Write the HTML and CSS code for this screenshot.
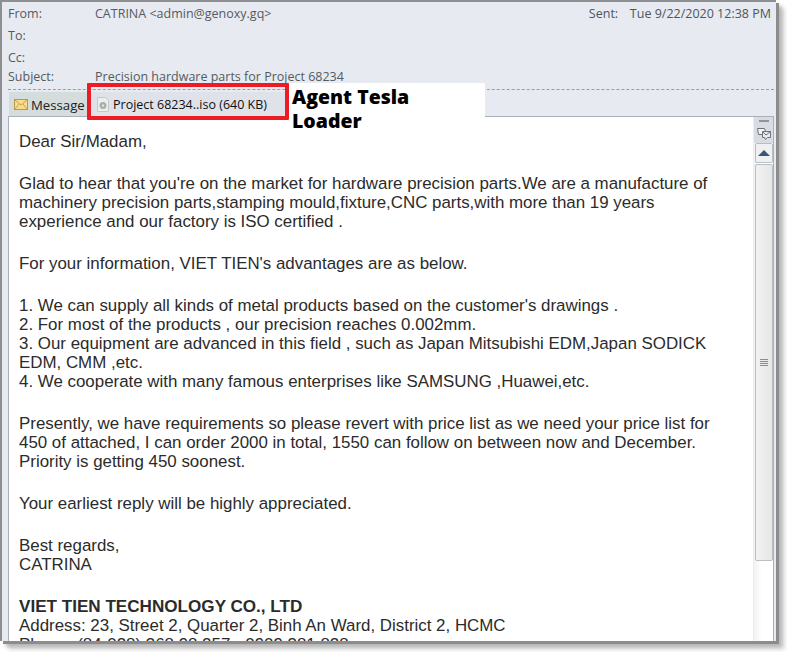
FILE: index.html
```html
<!DOCTYPE html>
<html lang="en">
<head>
<meta charset="utf-8">
<title>Precision hardware parts for Project 68234</title>
<link rel="stylesheet" href="styles.css">
</head>
<body>
<div class="window">
  <header class="head">
    <div class="row"><span class="label">From:</span><span class="value">CATRINA &lt;admin@genoxy.gq&gt;</span><span class="sent"><span class="sent-label">Sent:</span><span>Tue 9/22/2020 12:38 PM</span></span></div>
    <div class="row"><span class="label">To:</span></div>
    <div class="row"><span class="label">Cc:</span></div>
    <div class="row row-last"><span class="label">Subject:</span><span class="value">Precision hardware parts for Project 68234</span></div>
  </header>
  <nav class="tabs">
    <div class="tab tab-message">
      <svg class="ico" width="14" height="11" viewBox="0 0 14 11"><rect x="0.5" y="0.5" width="13" height="10" fill="#f8dc8a" stroke="#b99a45"/><path d="M1 1l6 5 6-5M1 10l4-5M13 10L9 5" fill="none" stroke="#c9a24c"/></svg>
      <span>Message</span>
    </div>
    <div class="tab tab-file">
      <svg class="ico" width="12" height="15" viewBox="0 0 12 15"><path d="M.5.500h8l3 3v11H.5z" fill="#eceeee" stroke="#c4c8c8"/><circle cx="6" cy="8.500" r="3.500" fill="#a9b0ac"/><circle cx="6" cy="8.500" r="1" fill="#f4f4f4"/></svg>
      <span>Project 68234..iso (640 KB)</span>
    </div>
  </nav>
  <main class="pane">
    <article class="mail">
      <p>Dear Sir/Madam,</p>
      <p>Glad to hear that you're on the market for hardware precision parts.We are a manufacture of machinery precision parts,stamping mould,fixture,CNC parts,with more than 19 years experience and our factory is ISO certified .</p>
      <p>For your information, VIET TIEN's advantages are as below.</p>
      <p>1. We can supply all kinds of metal products based on the customer's drawings .<br>2. For most of the products , our precision reaches 0.002mm.<br>3. Our equipment are advanced in this field , such as Japan Mitsubishi EDM,Japan SODICK EDM, CMM ,etc.<br>4. We cooperate with many famous enterprises like SAMSUNG ,Huawei,etc.</p>
      <p>Presently, we have requirements so please revert with price list as we need your price list for 450 of attached, I can order 2000 in total, 1550 can follow on between now and December. Priority is getting 450 soonest.</p>
      <p>Your earliest reply will be highly appreciated.</p>
      <p>Best regards,<br>CATRINA</p>
      <p><strong>VIET TIEN TECHNOLOGY CO., LTD</strong><br>Address: 23, Street 2, Quarter 2, Binh An Ward, District 2, HCMC<br>Phone: (84-028) 368 98 257 - 0909 381 828</p>
    </article>
    <aside class="scroll">
      <div class="dash"></div>
      <svg class="rules" width="14" height="12" viewBox="0 0 14 12"><path d="M.5.500h7l1 3h-2v3h-5z" fill="#f1f3f6" stroke="#6d7278"/><path d="M5.500 3.500h8v6h-3l-2 2-1-2h-2z" fill="#e8ebef" stroke="#6d7278"/><path d="M6 4l3 3 4-3" fill="none" stroke="#6d7278"/></svg>
      <button class="up" type="button" aria-label="Scroll up"><span class="tri"></span></button>
      <div class="thumb"><span class="grip"></span></div>
    </aside>
  </main>
</div>
<div class="note">
  <div class="note-text">Agent Tesla Loader</div>
</div>
<div class="redbox"></div>
</body>
</html>
```
FILE: styles.css
```css
html, body { margin: 0; padding: 0; background: #fff; }
body { width: 787px; height: 652px; overflow: hidden; position: relative; }

.window {
  box-sizing: border-box;
  width: 776px;
  height: 641px;
  display: flex;
  flex-direction: column;
  background: #e7eaf0;
  border-top: 2px solid #8d8f91;
  border-left: 2px solid #8d8f91;
  box-shadow: 3px 3px 0 #8c8c8c, 6px 6px 4px #b4b4b4, 9px 9px 4px #e2e2e2;
  font-family: "Open Sans", "Noto Sans", sans-serif;
  font-size: 12.5px;
  color: #555a60;
}

.head { box-sizing: border-box; height: 88px; margin: 0 2px 0 6px; padding: 1px 3px 0 0; border-bottom: 1px dashed #9a9ea3; flex: none; }
.row { display: flex; height: 22px; line-height: 22px; }
.row-last { height: 18px; line-height: 16px; }
.label { width: 87px; flex: none; }
.value { flex: none; }
.sent { margin-left: auto; display: flex; color: #50555b; }
.sent-label { width: 41px; }

.tabs { display: flex; height: 26px; padding-left: 7px; flex: none; color: #222; font-size: 13.200px; }
.tab { display: flex; align-items: center; height: 25px; margin-top: 2px; }
.tab-message { width: 78px; gap: 3px; padding-left: 5px; box-sizing: border-box; background: #d5dcdc; }
.tab-file { width: 200px; box-sizing: border-box; padding-left: 10px; gap: 4px; color: #111; font-size: 12.500px; background: #dfe3e9; }
.ico { flex: none; }

.pane {
  flex: 1;
  min-height: 0;
  display: flex;
  margin: 0 2px 0 6px;
  background: #fff;
  border: 1px solid #a9b0b8;
  border-bottom: 0;
  overflow: hidden;
}
.mail {
  flex: 1;
  padding: 15px 30px 0 10px;
  font-family: "Liberation Sans", Arial, sans-serif;
  font-size: 16.900px;
  line-height: 19px;
  color: #2b2b2b;
}
.mail p { margin: 0 0 23px; }
.mail strong { font-weight: 700; font-size: 17.100px; }

.scroll {
  width: 20px;
  flex: none;
  display: flex;
  flex-direction: column;
  align-items: center;
  background: linear-gradient(to right, #f2f2f2, #fff 40%);
  border-left: 1px solid #eceef0;
  box-sizing: border-box;
  position: relative;
}
.dash { width: 10px; height: 2px; background: #8d949c; margin-top: 3px; }
.rules { margin-top: 6px; }
.up {
  width: 18px; height: 20px; margin: 3px 0 0; padding: 0;
  display: flex; align-items: center; justify-content: center;
  background: #eef0f2; border: 1px solid #b9bec5; border-radius: 2px; flex: none;
}
.tri { width: 0; height: 0; border-left: 6px solid transparent; border-right: 6px solid transparent; border-bottom: 6px solid #3e5378; }
.thumb {
  box-sizing: border-box;
  width: 18px; height: 397px; margin-top: 1px; flex: none;
  display: flex; align-items: center; justify-content: center;
  background: linear-gradient(to right, #f2f2f2, #e6e6e6);
  border: 1px solid #b9bec5; border-radius: 2px;
}
.grip { width: 8px; height: 7px; background: repeating-linear-gradient(to bottom, #8c8c8c 0 1px, transparent 1px 2px); }
.scroll::before { content: ""; position: absolute; top: 0; left: 0; width: 20px; background: #d9dde3; height: 26px; z-index: 0; }
.scroll > * { position: relative; z-index: 1; }

.note {
  position: absolute;
  left: 289px; top: 83px;
  width: 196px; height: 34px;
  background: #fff;
}
.note-text {
  position: absolute;
  left: 3px; top: 2px;
  width: 130px;
  font-family: "Open Sans", "DejaVu Sans", sans-serif;
  font-weight: 800;
  font-size: 19.500px;
  line-height: 24px;
  color: #000;
}
.redbox {
  position: absolute;
  left: 87px; top: 83px;
  box-sizing: border-box;
  width: 202px; height: 37px;
  border: 4px solid #ed1c24;
  border-radius: 1px;
}
```
